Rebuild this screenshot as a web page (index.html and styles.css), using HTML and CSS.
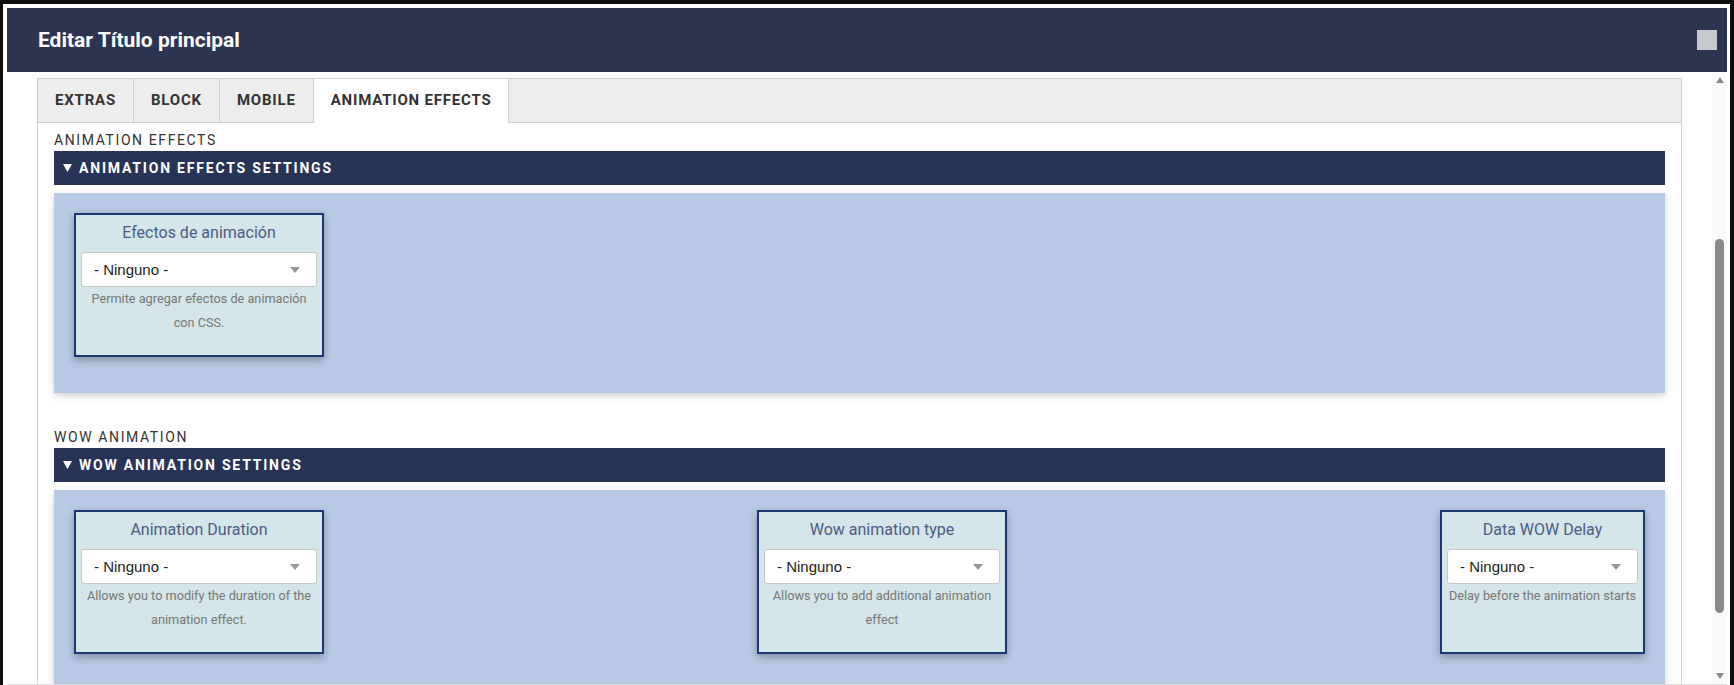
FILE: index.html
```html
<!DOCTYPE html>
<html lang="es">
<head>
<meta charset="utf-8">
<title>Editar Título principal</title>
<link rel="stylesheet" href="styles.css">
</head>
<body>
<div class="dialog">
  <header class="dlg-head">
    <h1 class="dlg-title">Editar Título principal</h1>
    <span class="dlg-close"></span>
  </header>
  <div class="dlg-body">
    <div class="dlg-main">
      <div class="tabs">
        <nav class="tab-bar">
          <span class="tab">EXTRAS</span>
          <span class="tab">BLOCK</span>
          <span class="tab">MOBILE</span>
          <span class="tab active">ANIMATION EFFECTS</span>
        </nav>
        <div class="tab-pane">
          <section class="group">
            <div class="group-label">ANIMATION EFFECTS</div>
            <div class="group-bar">
              <svg class="caret" width="9" height="8" viewBox="0 0 9 8"><polygon points="0,0 9,0 4.5,8" fill="#fff"/></svg>
              <span>ANIMATION EFFECTS SETTINGS</span>
            </div>
            <div class="group-panel">
              <div class="field">
                <div class="field-label">Efectos de animación</div>
                <div class="select"><span>- Ninguno -</span><i class="select-arrow"></i></div>
                <div class="field-desc">Permite agregar efectos de animación con CSS.</div>
              </div>
            </div>
          </section>
          <section class="group">
            <div class="group-label">WOW ANIMATION</div>
            <div class="group-bar">
              <svg class="caret" width="9" height="8" viewBox="0 0 9 8"><polygon points="0,0 9,0 4.5,8" fill="#fff"/></svg>
              <span>WOW ANIMATION SETTINGS</span>
            </div>
            <div class="group-panel">
              <div class="field">
                <div class="field-label">Animation Duration</div>
                <div class="select"><span>- Ninguno -</span><i class="select-arrow"></i></div>
                <div class="field-desc">Allows you to modify the duration of the animation effect.</div>
              </div>
              <div class="field">
                <div class="field-label">Wow animation type</div>
                <div class="select"><span>- Ninguno -</span><i class="select-arrow"></i></div>
                <div class="field-desc">Allows you to add additional animation effect</div>
              </div>
              <div class="field narrow">
                <div class="field-label">Data WOW Delay</div>
                <div class="select"><span>- Ninguno -</span><i class="select-arrow"></i></div>
                <div class="field-desc">Delay before the animation starts</div>
              </div>
            </div>
          </section>
        </div>
      </div>
    </div>
    <div class="scrollbar">
      <i class="sb-up"></i>
      <span class="sb-thumb"></span>
      <span class="sb-fill"></span>
      <i class="sb-down"></i>
    </div>
  </div>
</div>
</body>
</html>
```

FILE: styles.css
```css
* { box-sizing: border-box; }

html, body {
  margin: 0;
  height: 685px;
  overflow: hidden;
}

body {
  background: #0e0e10;
  font-family: Roboto, "Liberation Sans", sans-serif;
  color: #333;
}

.dialog {
  margin: 4px 4px 0 3px;
  padding: 4px 3px 0 4px;
  background: #fff;
}

.dlg-head {
  height: 64px;
  background: #2d3451;
  display: flex;
  align-items: center;
  justify-content: space-between;
  padding: 0 10px 0 31px;
}

.dlg-title {
  margin: 0;
  color: #fff;
  font-size: 21px;
  font-weight: 700;
  line-height: 24px;
}

.dlg-close {
  width: 20px;
  height: 20px;
  background: #c8c9ce;
}

.dlg-body {
  height: 613px;
  display: flex;
  border-bottom: 1px solid #dcdcdc;
}

.dlg-main {
  flex: 1;
  overflow: hidden;
  padding: 6px 30px 0 30px;
}

.tabs {
  border: 1px solid #cfcfcf;
  border-bottom: none;
  min-height: 700px;
}

.tab-bar {
  display: flex;
  height: 44px;
  background: #ededed;
  border-bottom: 1px solid #cfcfcf;
}

.tab {
  height: 43px;
  line-height: 43px;
  padding: 0 17px;
  border-right: 1px solid #cfcfcf;
  font-size: 15px;
  font-weight: 700;
  letter-spacing: 0.8px;
  color: #333;
}

.tab.active {
  height: 44px;
  background: #fff;
}

.tab-pane {
  padding: 7px 16px 0 16px;
}

.group {
  margin-bottom: 34px;
}

.group-label {
  font-size: 14px;
  line-height: 20px;
  letter-spacing: 1.6px;
  color: #333;
  margin-bottom: 1px;
}

.group-bar {
  height: 34px;
  background: #283457;
  color: #fff;
  display: flex;
  align-items: center;
  padding-left: 9px;
  font-size: 14px;
  font-weight: 700;
  letter-spacing: 1.8px;
}

.caret {
  margin-right: 7px;
  flex: none;
}

.group-panel {
  margin-top: 8px;
  background: #b8c9e5;
  padding: 20px 20px 36px;
  box-shadow: 0 3px 7px rgba(0, 0, 0, 0.18);
  display: flex;
  justify-content: space-between;
  align-items: stretch;
}

.field {
  width: 250px;
  border: 2px solid #1b3775;
  background: #d4e6e9;
  padding: 7px 5px 20px;
  text-align: center;
  box-shadow: 0 3px 8px rgba(0, 0, 0, 0.3);
}

.field.narrow {
  width: 205px;
}

.field-label {
  font-size: 16px;
  line-height: 22px;
  color: #4b5c87;
  margin-bottom: 8px;
}

.select {
  height: 35px;
  background: #fff;
  border: 1px solid #c8c8c8;
  border-radius: 3px;
  display: flex;
  align-items: center;
  justify-content: space-between;
  padding: 0 16px 0 12px;
  font-family: "Liberation Sans", Arial, sans-serif;
  font-size: 15px;
  color: #222;
  text-align: left;
}

.select-arrow {
  width: 0;
  height: 0;
  border-left: 5px solid transparent;
  border-right: 5px solid transparent;
  border-top: 6px solid #999;
}

.field-desc {
  font-size: 12.7px;
  line-height: 24px;
  color: #777;
}

.scrollbar {
  width: 15px;
  flex: none;
  background: #fafafa;
  display: flex;
  flex-direction: column;
  align-items: center;
  padding: 5px 0;
}

.sb-up, .sb-down {
  width: 0;
  height: 0;
  border-left: 4.5px solid transparent;
  border-right: 4.5px solid transparent;
}

.sb-up { border-bottom: 6px solid #8a8a8a; }
.sb-down { border-top: 6px solid #8a8a8a; }

.sb-thumb {
  width: 9px;
  height: 374px;
  margin-top: 156px;
  border-radius: 5px;
  background: #8a8a8a;
}

.sb-fill { flex: 1; }
```
